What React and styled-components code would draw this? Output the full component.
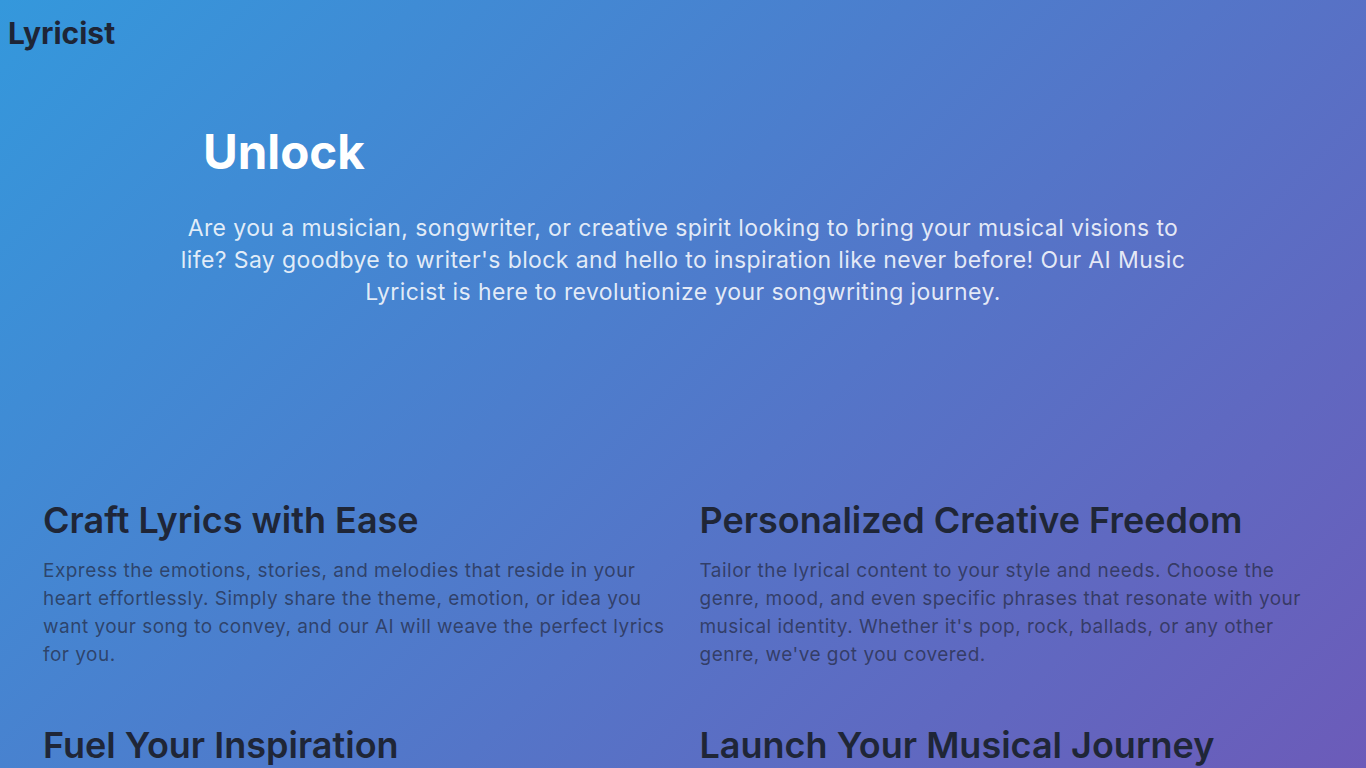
import React from "react";
import styled, { createGlobalStyle } from "styled-components";

const Global = createGlobalStyle`
  html, body { margin: 0; padding: 0; }
  body {
    font-family: Inter, "Noto Sans", sans-serif;
    min-height: 100vh;
    background: linear-gradient(135deg, #3498dc 0%, #6c5bb9 100%);
    background-attachment: fixed;
  }
`;

const Page = styled.div`
  min-height: 100vh;
  display: flex;
  flex-direction: column;
`;

const Header = styled.header`
  padding: 15px 8px 0;
`;

const Logo = styled.div`
  font-size: 30px;
  font-weight: 700;
  line-height: 36px;
  color: #1e2536;
`;

const Hero = styled.section`
  display: flex;
  flex-direction: column;
  align-items: center;
  padding-top: 72px;
`;

const HeroTitle = styled.h1`
  width: 960px;
  margin: 0;
  font-size: 47.5px;
  font-weight: 700;
  line-height: 58px;
  color: #ffffff;
`;

const HeroText = styled.p`
  max-width: 1024px;
  margin: 31px 0 0;
  text-align: center;
  font-size: 23px;
  letter-spacing: 0.4px;
  line-height: 32px;
  color: rgba(255, 255, 255, 0.85);
`;

const Features = styled.section`
  display: grid;
  grid-template-columns: 1fr 1fr;
  column-gap: 33px;
  row-gap: 54px;
  padding: 190px 43px 0;
`;

const Feature = styled.article`
  display: flex;
  flex-direction: column;
`;

const FeatureTitle = styled.h2`
  margin: 0;
  font-size: 36px;
  font-weight: 600;
  line-height: 44px;
  color: #1f2637;
`;

const FeatureText = styled.p`
  margin: 15px 0 0;
  font-size: 19px;
  font-weight: 400;
  letter-spacing: 0.48px;
  line-height: 28px;
  color: rgba(35, 40, 62, 0.7);
`;

const features = [
  {
    title: "Craft Lyrics with Ease",
    text: "Express the emotions, stories, and melodies that reside in your heart effortlessly. Simply share the theme, emotion, or idea you want your song to convey, and our AI will weave the perfect lyrics for you.",
  },
  {
    title: "Personalized Creative Freedom",
    text: "Tailor the lyrical content to your style and needs. Choose the genre, mood, and even specific phrases that resonate with your musical identity. Whether it's pop, rock, ballads, or any other genre, we've got you covered.",
  },
  {
    title: "Fuel Your Inspiration",
    text: "Stuck in a creative rut? Let our AI spark new ideas and fresh perspectives, helping you discover words and themes you never imagined.",
  },
  {
    title: "Launch Your Musical Journey",
    text: "Whether you're a seasoned artist or just starting out, our AI Music Lyricist is your companion for turning ideas into finished songs.",
  },
];

export default function App() {
  return (
    <Page>
      <Global />
      <Header>
        <Logo>Lyricist</Logo>
      </Header>
      <Hero>
        <HeroTitle>Unlock</HeroTitle>
        <HeroText>
          Are you a musician, songwriter, or creative spirit looking to bring your musical visions to
          life? Say goodbye to writer's block and hello to inspiration like never before! Our AI Music
          Lyricist is here to revolutionize your songwriting journey.
        </HeroText>
      </Hero>
      <Features>
        {features.map((f) => (
          <Feature key={f.title}>
            <FeatureTitle>{f.title}</FeatureTitle>
            <FeatureText>{f.text}</FeatureText>
          </Feature>
        ))}
      </Features>
    </Page>
  );
}
